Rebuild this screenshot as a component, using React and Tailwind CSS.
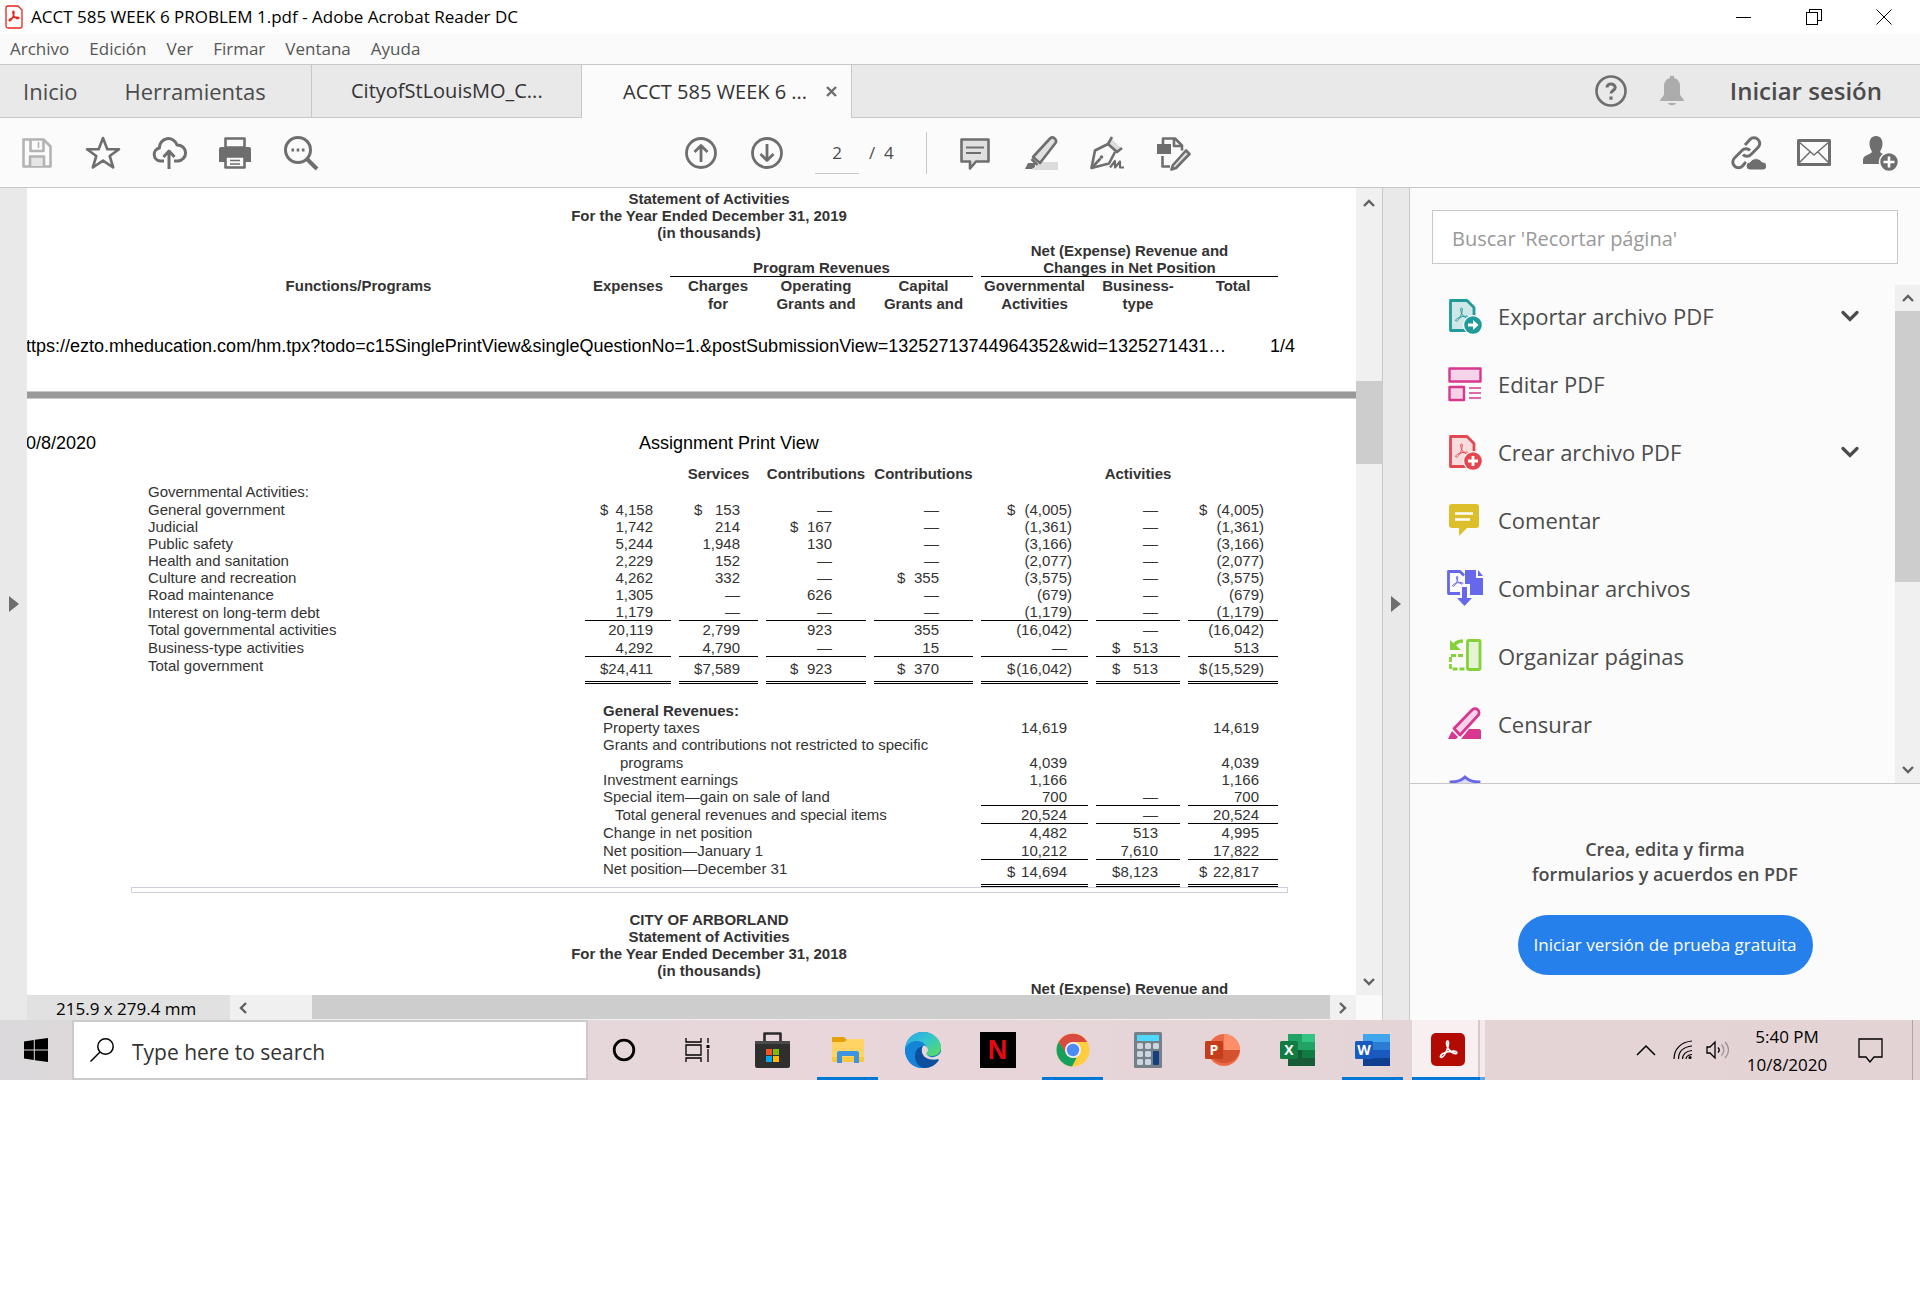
import clsx from "clsx";

const columns = [
  { width: "w-[86px]", pad: "pr-[18px]", money: "w-[53px]" },
  { width: "w-[79px]", pad: "pr-[18px]", money: "w-[46px]" },
  { width: "w-[100px]", pad: "pr-[34px]", money: "w-[42px]" },
  { width: "w-[99px]", pad: "pr-[34px]", money: "w-[42px]" },
  { width: "w-[107px]", pad: "pr-[16px]", money: "w-[65px]", signed: true },
  { width: "w-[84px]", pad: "pr-[22px]", money: "w-[46px]" },
  { width: "w-[90px]", pad: "pr-[14px]", money: "w-[65px]", signed: true },
];

const activities = [
  { label: "Governmental Activities:", tall: true, cells: ["", "", "", "", "", "", ""] },
  { label: "General government", cells: ["$4,158", "$153", "—", "—", "$(4,005)", "—", "$(4,005)"] },
  { label: "Judicial", cells: ["1,742", "214", "$167", "—", "(1,361)", "—", "(1,361)"] },
  { label: "Public safety", cells: ["5,244", "1,948", "130", "—", "(3,166)", "—", "(3,166)"] },
  { label: "Health and sanitation", cells: ["2,229", "152", "—", "—", "(2,077)", "—", "(2,077)"] },
  { label: "Culture and recreation", cells: ["4,262", "332", "—", "$355", "(3,575)", "—", "(3,575)"] },
  { label: "Road maintenance", tall: true, cells: ["1,305", "—", "626", "—", "(679)", "—", "(679)"] },
  { label: "Interest on long-term debt", rule: "single", cells: ["1,179", "—", "—", "—", "(1,179)", "—", "(1,179)"] },
  { label: "Total governmental activities", tall: true, cells: ["20,119", "2,799", "923", "355", "(16,042)", "—", "(16,042)"] },
  { label: "Business-type activities", tall: true, rule: "single", cells: ["4,292", "4,790", "—", "15", "—", "$513", "513"] },
  { label: "Total government", rule: "double", cells: ["$24,411", "$7,589", "$923", "$370", "$(16,042)", "$513", "$(15,529)"] },
];

const revenues = [
  { label: "General Revenues:", bold: true, cells: ["", "", ""] },
  { label: "Property taxes", cells: ["14,619", "", "14,619"] },
  { label: "Grants and contributions not restricted to specific", tall: true, cells: ["", "", ""] },
  { label: "programs", indent: "pl-[35px]", cells: ["4,039", "", "4,039"] },
  { label: "Investment earnings", cells: ["1,166", "", "1,166"] },
  { label: "Special item—gain on sale of land", tall: true, rule: "single", cells: ["700", "—", "700"] },
  { label: "Total general revenues and special items", indent: "pl-[30px]", tall: true, rule: "single", cells: ["20,524", "—", "20,524"] },
  { label: "Change in net position", tall: true, cells: ["4,482", "513", "4,995"] },
  { label: "Net position—January 1", tall: true, rule: "single", cells: ["10,212", "7,610", "17,822"] },
  { label: "Net position—December 31", rule: "double", cells: ["$14,694", "$8,123", "$22,817"] },
];

const tools = [
  { name: "Exportar archivo PDF", icon: ExportIcon, menu: true },
  { name: "Editar PDF", icon: EditIcon },
  { name: "Crear archivo PDF", icon: CreateIcon, menu: true },
  { name: "Comentar", icon: CommentToolIcon },
  { name: "Combinar archivos", icon: CombineIcon },
  { name: "Organizar páginas", icon: OrganizeIcon },
  { name: "Censurar", icon: RedactIcon },
  { name: "", icon: ShieldIcon },
];

const acrobatLoop =
  "M11.6 3.6c-1.7 0-1.2 4.2.6 7.4s5.2 5.3 7.4 5.1c2-.2 1.5-2.4-1.7-2.5-3.7-.1-8.2 1-11 2.5-2.6 1.4-3.1 3.6-1.7 3.7 1.9.1 4.4-3.9 5.9-7.8 1.4-3.7 2.1-8.4.5-8.4z";

/* ---------- document ---------- */

function Amount({ value, column }) {
  if (!value) return null;
  const inset = column.signed && !value.endsWith(")") && "pr-[5px]";
  if (value.startsWith("$")) {
    return (
      <span className={clsx("inline-flex justify-between", column.money, inset)}>
        <span>$</span>
        <span>{value.slice(1)}</span>
      </span>
    );
  }
  return <span className={clsx(inset)}>{value}</span>;
}

function StatementRow({ row, wide }) {
  const offset = wide ? 4 : 0;
  return (
    <tr className={row.rule === "double" ? "h-[27px]" : row.tall ? "h-[18px]" : "h-[17px]"}>
      {wide && <td />}
      <th
        scope="row"
        colSpan={wide ? 4 : 1}
        className={clsx(
          "text-left",
          row.rule === "double" ? "pt-px align-top" : "align-middle",
          row.bold ? "font-bold" : "font-normal",
          wide && (row.indent || "pl-[18px]")
        )}
      >
        {row.label}
      </th>
      {row.cells.map((value, i) => {
        const column = columns[i + offset];
        return (
          <td
            key={i}
            className={clsx(
              "text-right",
              column.pad,
              row.rule === "single" && "border-b border-black",
              row.rule === "double" && "border-b-3 border-double border-black"
            )}
          >
            <Amount value={value} column={column} />
          </td>
        );
      })}
    </tr>
  );
}

function StatementTitle({ lines }) {
  return (
    <div className="ml-[113px] w-[1138px] text-center text-[15px] leading-[17px] font-bold">
      {lines.map((line) => (
        <p key={line} className="last:leading-[18px]">{line}</p>
      ))}
    </div>
  );
}

function HeadingTable({ short }) {
  return (
    <table className="ml-[113px] w-[1146px] table-fixed border-separate border-spacing-x-2 border-spacing-y-0 text-[15px] leading-[16px]">
      <colgroup>
        <col />
        <col className="w-[77px]" />
        <col className="w-[88px]" />
        <col className="w-[100px]" />
        <col className="w-[99px]" />
        <col className="w-[107px]" />
        <col className="w-[84px]" />
        <col className="w-[90px]" />
      </colgroup>
      <thead>
        <tr className="h-[18px]">
          <td colSpan={5} />
          <th colSpan={3}>Net (Expense) Revenue and</th>
        </tr>
        {!short && (
          <>
            <tr className="h-[17px]">
              <td colSpan={2} />
              <th colSpan={3} className="border-b border-black">Program Revenues</th>
              <th colSpan={3} className="border-b border-black">Changes in Net Position</th>
            </tr>
            <tr className="h-[18px]">
              <th className="pr-2">Functions/Programs</th>
              <th className="pl-2">Expenses</th>
              <th className="pl-2">Charges</th>
              <th>Operating</th>
              <th>Capital</th>
              <th>Governmental</th>
              <th>Business-</th>
              <th>Total</th>
            </tr>
            <tr className="h-[18px]">
              <td colSpan={2} />
              <th className="pl-2">for</th>
              <th>Grants and</th>
              <th>Grants and</th>
              <th>Activities</th>
              <th>type</th>
              <td />
            </tr>
          </>
        )}
      </thead>
    </table>
  );
}

function StatementTable() {
  return (
    <table className="ml-[113px] w-[1146px] table-fixed border-separate border-spacing-x-2 border-spacing-y-0 text-[15px] leading-[16px]">
      <colgroup>
        <col />
        {columns.map((column, i) => (
          <col key={i} className={column.width} />
        ))}
      </colgroup>
      <thead>
        <tr className="h-[18px]">
          <td colSpan={2} />
          <th>Services</th>
          <th>Contributions</th>
          <th>Contributions</th>
          <td />
          <th>Activities</th>
          <td />
        </tr>
      </thead>
      <tbody>
        {activities.map((row) => (
          <StatementRow key={row.label} row={row} />
        ))}
        <tr className="h-[18px]">
          <td colSpan={8} />
        </tr>
        {revenues.map((row) => (
          <StatementRow key={row.label} row={row} wide />
        ))}
      </tbody>
    </table>
  );
}

function PdfPages() {
  return (
    <div className="min-h-0 flex-1 overflow-hidden bg-white font-['Liberation_Sans',Arial,sans-serif] text-[#333]">
      <div className="h-[203px] pt-[2px]">
        <StatementTitle
          lines={["Statement of Activities", "For the Year Ended December 31, 2019", "(in thousands)"]}
        />
        <HeadingTable />
        <div className="-ml-[11px] mt-[22px] flex text-[18px] leading-[22px] whitespace-nowrap text-black">
          <span className="w-[1254px]">
            https://ezto.mheducation.com/hm.tpx?todo=c15SinglePrintView&amp;singleQuestionNo=1.&amp;postSubmissionView=13252713744964352&amp;wid=1325271431…
          </span>
          <span>1/4</span>
        </div>
      </div>
      <div className="h-[8px] border-y border-[#c8c8c8] bg-[#999]" />
      <div className="-ml-[11px] mt-[33px] flex text-[18px] leading-[22px] text-black">
        <span className="w-[623px]">10/8/2020</span>
        <span>Assignment Print View</span>
      </div>
      <div className="mt-[11px]">
        <StatementTable />
      </div>
      <div className="ml-[104px] h-[6px] w-[1157px] border border-[#ccd0e0]" />
      <div className="mt-[18px]">
        <StatementTitle
          lines={[
            "CITY OF ARBORLAND",
            "Statement of Activities",
            "For the Year Ended December 31, 2018",
            "(in thousands)",
          ]}
        />
        <HeadingTable short />
      </div>
    </div>
  );
}

/* ---------- small shared pieces ---------- */

function Arrow({ className }) {
  return (
    <svg viewBox="0 0 12 8" className={clsx("h-[8px] w-[12px]", className)} fill="none" stroke="#606060" strokeWidth="2.4">
      <path d="M1 7l5-5 5 5" />
    </svg>
  );
}

function Stroke({ className, children, width = 2.6 }) {
  return (
    <svg
      viewBox="0 0 36 36"
      className={clsx("size-9", className)}
      fill="none"
      stroke="#6e6e6e"
      strokeWidth={width}
      strokeLinejoin="round"
    >
      {children}
    </svg>
  );
}

function SideHandle({ className }) {
  return (
    <button aria-label="Mostrar panel" className={clsx("flex shrink-0 items-center justify-center bg-[#e9e9e9]", className)}>
      <svg viewBox="0 0 10 16" className="h-[16px] w-[10px]" fill="#6e6e6e">
        <path d="M0 0l10 8-10 8z" />
      </svg>
    </button>
  );
}

/* ---------- tool icons ---------- */

function PageGlyph({ color, tint, children }) {
  return (
    <svg viewBox="0 0 36 36" className="size-9" fill="none">
      <path d="M3.500 2.500H20l7 7v23H3.500z" fill={tint} stroke={color} strokeWidth="2.800" strokeLinejoin="round" />
      <g transform="translate(5 7) scale(.82)">
        <path d={acrobatLoop} stroke={color} strokeWidth="1.200" />
      </g>
      <circle cx="26" cy="27" r="10" fill="#fbfbfb" />
      <circle cx="26" cy="27" r="8.800" fill={color} />
      {children}
    </svg>
  );
}

function ExportIcon() {
  return (
    <PageGlyph color="#1f9b9b" tint="#cfe7e7">
      <path d="M21 25.500h5v-3.500l5.500 5-5.500 5v-3.500h-5z" fill="#fff" />
    </PageGlyph>
  );
}

function CreateIcon() {
  return (
    <PageGlyph color="#e34850" tint="#f8dcdd">
      <path d="M26 22v10M21 27h10" stroke="#fff" strokeWidth="2.800" />
    </PageGlyph>
  );
}

function EditIcon() {
  return (
    <svg viewBox="0 0 36 36" className="size-9" fill="#f6d3e8" stroke="#d83790" strokeWidth="2.400" strokeLinejoin="round">
      <path d="M2.500 2.500h31v13h-31zM2.500 21h14.500v13H2.500z" />
      <path d="M22 22h12M22 27h12M22 32h12" strokeWidth="1.400" />
    </svg>
  );
}

function CommentToolIcon() {
  return (
    <svg viewBox="0 0 36 36" className="size-9" fill="#ddbf2b">
      <path d="M5 2h24a3 3 0 0 1 3 3v18a3 3 0 0 1-3 3H20l-8 8v-8H5a3 3 0 0 1-3-3V5a3 3 0 0 1 3-3z" />
      <path d="M8 11.500h18M8 17.500h15" stroke="#fff" strokeWidth="2.400" />
    </svg>
  );
}

function CombineIcon() {
  return (
    <svg viewBox="0 0 36 36" className="size-9" fill="none">
      <path d="M13 23.500H1.500v-22H13l4 4" stroke="#6767ec" strokeWidth="2.800" strokeLinejoin="round" />
      <g transform="translate(3 4) scale(.62)">
        <path d={acrobatLoop} stroke="#6767ec" strokeWidth="1.600" />
      </g>
      <path d="M18 0h11v8h8v17H23V14h-5z" fill="#6767ec" />
      <path d="M31 0l5 6h-5z" fill="#6767ec" />
      <path d="M15 17h5v11h5l-7.500 8-7.500-8h5z" fill="#6767ec" />
    </svg>
  );
}

function OrganizeIcon() {
  return (
    <svg viewBox="0 0 36 36" className="size-9" fill="none" stroke="#84d13a" strokeWidth="2.800">
      <rect x="20.500" y="2.500" width="12.500" height="29" rx="1" fill="#e3f3d3" />
      <path d="M16 17.500H3.500V31H18" strokeDasharray="5 2" />
      <path d="M16 3c-5 0-8 2-9 5" strokeWidth="3.400" />
      <path d="M3 2v10h11z" fill="#84d13a" stroke="none" />
    </svg>
  );
}

function RedactIcon() {
  return (
    <svg viewBox="0 0 36 36" className="size-9" fill="#d83790">
      <path d="M7 22.500L25 4a4 4 0 0 1 6 5.500L13 29z" fill="#f6d3e8" stroke="#d83790" strokeWidth="2.800" strokeLinejoin="round" />
      <path d="M1 33l4-8 6 6-2 2zM22 23h10a2 2 0 0 1 2 2v8H14z" />
    </svg>
  );
}

function ShieldIcon() {
  return (
    <svg viewBox="0 0 36 36" className="size-9" fill="#dcdcfa" stroke="#6767ec" strokeWidth="2.800">
      <path d="M4 8c6 0 10-1 14-5 4 4 8 5 14 5v12c0 8-7 12-14 15C11 32 4 28 4 20z" />
    </svg>
  );
}

/* ---------- window chrome ---------- */

function TitleBar() {
  return (
    <header className="flex h-[34px] items-center bg-white pr-[28px] pl-[5px]">
      <svg viewBox="0 0 18 24" className="h-[24px] w-[18px]" fill="none" stroke="#e8231a">
        <path d="M3 1h10l4 4v16a2 2 0 0 1-2 2H3a2 2 0 0 1-2-2V3a2 2 0 0 1 2-2z" strokeWidth="1.300" />
        <g transform="translate(1.500 4) scale(.6)">
          <path d={acrobatLoop} strokeWidth="2.200" />
        </g>
      </svg>
      <h1 className="ml-[8px] flex-1 text-[17px] text-black">ACCT 585 WEEK 6 PROBLEM 1.pdf - Adobe Acrobat Reader DC</h1>
      <div className="flex gap-[54px]">
        <button aria-label="Minimizar">
          <svg viewBox="0 0 16 16" className="size-4" stroke="#000" shapeRendering="crispEdges">
            <path d="M0 8.500h15" />
          </svg>
        </button>
        <button aria-label="Restaurar">
          <svg viewBox="0 0 16 16" className="size-4" fill="none" stroke="#000" shapeRendering="crispEdges">
            <path d="M.5 3.500h11v12H.5zM3.500 3.500v-3h12v11h-4" />
          </svg>
        </button>
        <button aria-label="Cerrar">
          <svg viewBox="0 0 16 16" className="size-4" stroke="#000">
            <path d="M.5.5l15 15M15.500.5l-15 15" />
          </svg>
        </button>
      </div>
    </header>
  );
}

function MenuBar() {
  return (
    <nav className="flex h-[30px] items-center gap-[20px] bg-[#fafafa] pl-[10px] text-[17px] text-[#555]">
      {["Archivo", "Edición", "Ver", "Firmar", "Ventana", "Ayuda"].map((item) => (
        <button key={item}>{item}</button>
      ))}
    </nav>
  );
}

function TabBar() {
  return (
    <div className="flex h-[54px] border-t border-[#c8c8c8] bg-[#e9e9e9] text-[#4b4b4b]">
      <div className="flex w-[312px] gap-[47px] border-r border-b border-[#c8c8c8] pl-[23px] text-[22px]">
        <button>Inicio</button>
        <button>Herramientas</button>
      </div>
      <button className="w-[270px] border-r border-b border-[#c8c8c8] pl-[39px] text-left text-[20px] text-[#333]">
        CityofStLouisMO_C...
      </button>
      <div className="flex w-[270px] items-center border-r border-[#c8c8c8] bg-[#fbfbfb] pl-[41px] text-[20px] text-[#333]">
        <button className="w-[203px] text-left">ACCT 585 WEEK 6 ...</button>
        <button aria-label="Cerrar pestaña">
          <svg viewBox="0 0 11 11" className="size-[11px]" stroke="#6e6e6e" strokeWidth="2.400">
            <path d="M1 1l9 9M10 1l-9 9" />
          </svg>
        </button>
      </div>
      <div className="flex flex-1 items-center justify-end border-b border-[#c8c8c8] pr-[38px]">
        <button aria-label="Ayuda">
          <svg viewBox="0 0 32 32" className="size-8" fill="none" stroke="#6e6e6e" strokeWidth="2.600">
            <circle cx="16" cy="16" r="14.500" />
            <path d="M12 12.500c0-5 8.200-4.600 8.200 0 0 3-4.200 3-4.200 6" strokeWidth="3" />
            <path d="M16 21.500v3.200" strokeWidth="3.200" />
          </svg>
        </button>
        <button aria-label="Notificaciones" className="ml-[32px]">
          <svg viewBox="0 0 26 30" className="h-[30px] w-[26px]" fill="#acacac">
            <path d="M11 0h4v2c4 1 6 4 6 8v8c0 2 4 5 4 7H1c0-2 4-5 4-7v-8c0-4 2-7 6-8zM9 27h8c-1 3-7 3-8 0z" />
          </svg>
        </button>
        <button className="ml-[45px] text-[24px] font-semibold">Iniciar sesión</button>
      </div>
    </div>
  );
}

function ToolBar() {
  return (
    <div className="flex h-[70px] items-center border-b border-[#c8c8c8] bg-[#fbfbfb] text-[#4b4b4b]">
      <div className="flex w-[683px] items-center gap-[30px] pl-[19px]">
        <button aria-label="Guardar">
          <svg viewBox="0 0 36 36" className="size-9" fill="none" stroke="#b3b3b3" strokeWidth="2.600" strokeLinejoin="round">
            <path d="M4.500 4.500h20l7 7v20h-27z" />
            <path d="M11.500 5v11h13V5" />
            <path d="M11 31V21.500h14V31" fill="#e6e6e6" />
            <path d="M19.500 7v6" strokeWidth="1.600" />
          </svg>
        </button>
        <button aria-label="Favoritos">
          <Stroke>
            <path d="M18 3l4.300 11.200H34L24.700 21l3.500 11.500L18 25.600 7.800 32.500 11.300 21 2 14.200h11.700z" />
          </Stroke>
        </button>
        <button aria-label="Subir a la nube">
          <Stroke width={3}>
            <path d="M13 26H9a6.600 6.600 0 0 1-.6-13A9 9 0 0 1 26 10a7.500 7.500 0 0 1 1 16h-4" />
            <path d="M18 34V17M12.500 22l5.500-6 5.500 6" />
          </Stroke>
        </button>
        <button aria-label="Imprimir">
          <Stroke>
            <path d="M8.500 3.500h19v9h-19z" />
            <path d="M4 12h28a2 2 0 0 1 2 2v13h-6v-5H8v5H2V14a2 2 0 0 1 2-2z" fill="#6e6e6e" stroke="none" />
            <path d="M8.500 21.500h19v11h-19z" fill="#fbfbfb" />
            <path d="M13 25.500h10M13 29h10" strokeWidth="1.400" />
          </Stroke>
        </button>
        <button aria-label="Buscar">
          <Stroke width={3}>
            <circle cx="15" cy="15" r="12.500" />
            <path d="M24 24l10 10" strokeWidth="4" />
            <path d="M8.500 15h2.600M13.700 15h2.600M18.900 15h2.600" />
          </Stroke>
        </button>
      </div>
      <button aria-label="Página anterior">
        <Stroke width={2.800}>
          <circle cx="18" cy="18" r="14.500" />
          <path d="M18 27V10.500M11.500 17L18 10.500l6.500 6.500" />
        </Stroke>
      </button>
      <button aria-label="Página siguiente" className="ml-[30px]">
        <Stroke width={2.800}>
          <circle cx="18" cy="18" r="14.500" />
          <path d="M18 9v16.500M11.500 19l6.500 6.500 6.500-6.500" />
        </Stroke>
      </button>
      <input
        aria-label="Página"
        defaultValue="2"
        className="ml-[30px] h-[42px] w-[44px] border-b border-[#c8c8c8] bg-transparent text-center text-[17px]"
      />
      <span className="ml-[10px] text-[17px] whitespace-pre">/  4</span>
      <div className="ml-[32px] h-[42px] w-px bg-[#c8c8c8]" />
      <div className="ml-[30px] flex gap-[30px]">
        <button aria-label="Comentario">
          <Stroke>
            <path d="M4.500 4.500h27v22H19l-6 7v-7H4.500z" fill="#e0e0e0" />
            <path d="M9 12.500h18M9 18h15" strokeWidth="1.800" />
          </Stroke>
        </button>
        <button aria-label="Resaltar">
          <Stroke>
            <path d="M18 27h17v8H9z" fill="#dcdcdc" stroke="none" />
            <path d="M10 22L27 3.500a3.600 3.600 0 0 1 5.500 4.500L17 28z" fill="#e0e0e0" />
            <path d="M2 34l3-6 7 0 0 4-3 2z" fill="#6e6e6e" stroke="none" />
            <path d="M8.500 24l6 6" />
          </Stroke>
        </button>
        <button aria-label="Firmar">
          <Stroke>
            <path d="M22 3l10 10-5 4-8-9z" fill="#dcdcdc" stroke="none" />
            <path d="M23 2l-4 7 9 8 5-4" />
            <path d="M19 9L6 15.500 2.500 33 20 28.500 26 17" />
            <path d="M3 32.500l8.500-9" />
            <circle cx="12.500" cy="22" r="1.800" fill="#6e6e6e" stroke="none" />
            <path d="M21 32.500l5-6.500v6.500l5-6v6h4" strokeWidth="2.200" />
          </Stroke>
        </button>
        <button aria-label="Más herramientas">
          <Stroke>
            <path d="M8 9V3.500h12l7 7v5" />
            <path d="M19 4v7h8" />
            <path d="M2 9h14v10H2z" fill="#6e6e6e" stroke="none" />
            <path d="M7.500 21v10.500H15" />
            <path d="M31 15.500l3.500 3.500L21 33l-4.500 1.500L18 30z" fill="#e0e0e0" />
          </Stroke>
        </button>
      </div>
      <div className="ml-auto flex gap-[30px] pr-[22px]">
        <button aria-label="Compartir vínculo">
          <Stroke width={3}>
            <path d="M15 10l5-5.500a5.500 5.500 0 0 1 8 0 5.500 5.500 0 0 1 0 8l-7 7a5.500 5.500 0 0 1-8 0" />
            <path d="M16 27l-3.500 4a5.500 5.500 0 0 1-8 0 5.500 5.500 0 0 1 0-8l7.500-7.500a5.500 5.500 0 0 1 8 0" />
            <path d="M20 35a4 4 0 0 1 0-8 7 7 0 0 1 12 0 4 4 0 0 1 1 8z" fill="#6e6e6e" stroke="#fbfbfb" strokeWidth="1" />
          </Stroke>
        </button>
        <button aria-label="Enviar por correo">
          <Stroke width={2.400}>
            <path d="M2.500 5.500h31v24h-31z" strokeWidth="3" />
            <path d="M3 7l15 13L33 7M3 28l11-11M33 28L22 17" strokeWidth="1.500" />
          </Stroke>
        </button>
        <button aria-label="Compartir con otros">
          <Stroke>
            <path d="M14 1c5 0 6.500 4 6.500 8s-2 6-2.500 8c2 2 6 3 7 5l-7 7H1v-4c0-5 7-5 9-8-.5-2-2.500-4-2.500-8S9 1 14 1z" fill="#6e6e6e" stroke="none" />
            <circle cx="27" cy="27" r="9.500" fill="#6e6e6e" stroke="#fbfbfb" strokeWidth="1.600" />
            <path d="M27 21.500v11M21.500 27h11" stroke="#fff" />
          </Stroke>
        </button>
      </div>
    </div>
  );
}

function DocumentArea() {
  return (
    <section className="flex min-w-0 flex-1 flex-col">
      <div className="flex min-h-0 flex-1">
        <div className="flex min-w-0 flex-1 flex-col">
          <PdfPages />
        </div>
        <div className="flex w-[26px] shrink-0 flex-col items-center bg-[#f0f0f0]">
          <button aria-label="Subir" className="flex h-[30px] items-center"><Arrow /></button>
          <div className="mt-[163px] h-[83px] w-full bg-[#cdcdcd]" />
          <button aria-label="Bajar" className="mt-auto flex h-[27px] items-center"><Arrow className="rotate-180" /></button>
        </div>
      </div>
      <div className="flex h-[25px] bg-[#fafafa]">
        <div className="w-[203px] shrink-0 bg-[#e1e1e1] pl-[29px] text-[17px] leading-[27px] text-black">215.9 x 279.4 mm</div>
        <div className="flex flex-1 bg-[#f0f0f0]">
          <button aria-label="Izquierda" className="flex w-[82px] items-center pl-[7px]"><Arrow className="-rotate-90" /></button>
          <div className="h-[24px] flex-1 bg-[#cdcdcd]" />
          <button aria-label="Derecha" className="flex w-[26px] items-center justify-center"><Arrow className="rotate-90" /></button>
        </div>
        <div className="w-[26px] shrink-0" />
      </div>
    </section>
  );
}

function ToolsPanel() {
  return (
    <aside className="flex w-[511px] shrink-0 flex-col border-l border-[#c8c8c8] bg-[#fbfbfb] text-[#4b4b4b]">
      <div className="px-[22px] pt-[22px]">
        <input
          aria-label="Buscar herramientas"
          placeholder="Buscar 'Recortar página'"
          className="h-[54px] w-full border border-[#c8c8c8] bg-white px-[19px] pt-[2px] text-[20px] placeholder:text-[#999]"
        />
      </div>
      <div className="mt-[21px] flex h-[498px] overflow-hidden">
        <ul className="flex flex-1 flex-col gap-[6px] pl-[37px]">
          {tools.map(({ name, icon: Icon, menu }) => (
            <li key={name} className="h-[62px] shrink-0">
              <button aria-label={name || "Proteger"} className="flex h-full w-full items-center pr-[36px] text-[22px]">
                <Icon />
                <span className="ml-[15px] flex-1 text-left">{name}</span>
                {menu && (
                  <svg viewBox="0 0 18 12" className="h-[12px] w-[18px]" fill="none" stroke="#4b4b4b" strokeWidth="3.200" strokeLinecap="round">
                    <path d="M2 2.500l7 7 7-7" />
                  </svg>
                )}
              </button>
            </li>
          ))}
        </ul>
        <div className="flex w-[25px] flex-col items-center bg-[#f0f0f0]">
          <button aria-label="Subir" className="flex h-[26px] items-center"><Arrow /></button>
          <div className="h-[271px] w-full bg-[#cdcdcd]" />
          <button aria-label="Bajar" className="mt-auto flex h-[26px] items-center"><Arrow className="rotate-180" /></button>
        </div>
      </div>
      <div className="flex-1 border-t border-[#c8c8c8] pt-[53px] text-center">
        <p className="text-[18px] leading-[25px] font-semibold">
          Crea, edita y firma
          <br />
          formularios y acuerdos en PDF
        </p>
        <button className="mt-[28px] h-[60px] w-[295px] rounded-full bg-[#2680eb] text-[17px] text-white">
          Iniciar versión de prueba gratuita
        </button>
      </div>
    </aside>
  );
}

/* ---------- taskbar ---------- */

function OfficeIcon({ letter, badge, children }) {
  return (
    <svg viewBox="0 0 36 36" className="size-9" aria-hidden="true">
      {children}
      <rect x="0" y="9" width="18" height="18" rx="1.500" fill={badge} />
      <text x="9" y="23" textAnchor="middle" fill="#fff" fontSize="14" fontWeight="700" fontFamily="Open Sans, sans-serif">
        {letter}
      </text>
    </svg>
  );
}

function TaskButton({ label, open, children }) {
  return (
    <button aria-label={label} className="relative flex h-full w-[75px] shrink-0 items-center justify-center">
      {children}
      {open && <span className="absolute inset-x-[7px] bottom-0 h-[3px] bg-[#0078d7]" />}
    </button>
  );
}

function Taskbar() {
  return (
    <footer className="flex h-[60px] items-center bg-linear-to-r from-[#dbd9db] from-0% via-[#e8d6da] via-40% to-[#e3d3d4] to-100%">
      <button aria-label="Inicio" className="flex w-[72px] shrink-0 justify-center">
        <svg viewBox="0 0 24 24" className="size-6" fill="#000">
          <path d="M0 3.400l9.800-1.400v9.500H0zM10.800 1.800L24 0v11.500H10.800zM0 12.500h9.800V22L0 20.600zM10.800 12.500H24V24l-13.200-1.800z" />
        </svg>
      </button>
      <label className="flex h-full w-[516px] shrink-0 items-center border-2 border-[#cbcbcb] bg-white pl-[16px]">
        <svg viewBox="0 0 24 24" className="size-6" fill="none" stroke="#000" strokeWidth="1.500">
          <circle cx="15.500" cy="8.500" r="7.700" />
          <path d="M10 14L.5 23.500" />
        </svg>
        <input
          aria-label="Search"
          placeholder="Type here to search"
          className="ml-[18px] h-full flex-1 pt-1 text-[21px] placeholder:text-[#333]"
        />
      </label>
      <button aria-label="Cortana" className="flex w-[72px] shrink-0 justify-center">
        <svg viewBox="0 0 24 24" className="size-6" fill="none" stroke="#000" strokeWidth="2.800">
          <circle cx="12" cy="12" r="9.800" />
        </svg>
      </button>
      <TaskButton label="Task View">
        <svg viewBox="0 0 26 24" className="h-[24px] w-[26px]" fill="none" stroke="#000" strokeWidth="1.300">
          <path d="M1 0v4h15V0M1 7h15v10H1zM1 24v-4h15v4M23 0v5M23 11v13" />
          <path d="M21.500 7h3v3h-3z" fill="#000" stroke="none" />
        </svg>
      </TaskButton>
      <TaskButton label="Microsoft Store">
        <svg viewBox="0 0 36 36" className="size-9">
          <path d="M9.500 11V1.500h16V11" fill="none" stroke="#2b2b2b" strokeWidth="2.600" strokeLinejoin="round" />
          <path d="M0 9h35v25a2 2 0 0 1-2 2H2a2 2 0 0 1-2-2z" fill="#2f2f2f" />
          <path d="M0 9h35v3H0z" fill="#4a4a4a" />
          <path d="M11 17h6v6h-6z" fill="#f35325" />
          <path d="M18 17h6v6h-6z" fill="#81bc06" />
          <path d="M11 24h6v6h-6z" fill="#05a6f0" />
          <path d="M18 24h6v6h-6z" fill="#ffba08" />
        </svg>
      </TaskButton>
      <TaskButton label="File Explorer" open>
        <svg viewBox="0 0 36 36" className="size-9">
          <path d="M2 6a1 1 0 0 1 1-1h11l3 3v5H2z" fill="#e3a008" />
          <path d="M2 10h12l4-3h15a1 1 0 0 1 1 1v21a1 1 0 0 1-1 1H3a1 1 0 0 1-1-1z" fill="#ffd464" />
          <path d="M2 25h32v4a1 1 0 0 1-1 1H3a1 1 0 0 1-1-1z" fill="#fcc740" />
          <path d="M7 31V21a2 2 0 0 1 2-2h18a2 2 0 0 1 2 2v10h-5v-7H12v7z" fill="#3b96dd" />
        </svg>
      </TaskButton>
      <TaskButton label="Microsoft Edge">
        <svg viewBox="0 0 36 36" className="size-9">
          <defs>
            <linearGradient id="edge-top" x1="0" y1="0" x2="1" y2="1">
              <stop offset="0" stopColor="#2aa9ee" />
              <stop offset=".5" stopColor="#35c6c9" />
              <stop offset="1" stopColor="#5fe04f" />
            </linearGradient>
          </defs>
          <circle cx="18" cy="18" r="18" fill="#0a7ad1" />
          <path d="M0 17C1 7 8 0 18 0c11 0 18 8 18 15 0 6-4 9-9 9-4 0-7-1-6-3 3-4 1-8-4-9-7-1.500-15 0-17 5z" fill="url(#edge-top)" />
          <path d="M0 17c2-6 8-8.500 13-8 5 .5 8 4 8 6-6-2-11 3-11 9 0 5 3 9 7 12C7 36 0 28 0 17z" fill="#1583d8" />
          <path d="M10 24c0-6 4-9 8-10-3 3-1 14 12 14 3 0 4-1 4 0-3 5-9 8-14 8-6 0-10-6-10-12z" fill="#0c4f9e" />
          <path d="M18 14c2-1 5 1 5 4 0 2-3 3-1 5 4 4 11 2 14-3v8c-1 1-2-1-3-1-13 3-19-6-15-13z" fill="#e8d6da" />
        </svg>
      </TaskButton>
      <TaskButton label="Netflix">
        <span className="flex size-9 items-center justify-center bg-black font-['Liberation_Sans_Narrow','Liberation_Sans',sans-serif] text-[27px] font-bold text-[#e50914]">
          N
        </span>
      </TaskButton>
      <TaskButton label="Google Chrome" open>
        <svg viewBox="0 0 36 36" className="size-9">
          <circle cx="18" cy="18" r="16.500" fill="#ffcd40" />
          <path d="M3.700 9.800A16.500 16.500 0 0 1 32.300 10H18l-7.400 12z" fill="#d94b3f" />
          <path d="M3.700 9.800L11.500 22l10 4-4.500 8.500A16.500 16.500 0 0 1 3.700 9.800z" fill="#15a05d" />
          <circle cx="18" cy="18" r="8" fill="#f1f1f1" />
          <circle cx="18" cy="18" r="6.200" fill="#4c8bf5" />
        </svg>
      </TaskButton>
      <TaskButton label="Calculator">
        <svg viewBox="0 0 28 36" className="h-[36px] w-[28px]">
          <rect width="28" height="36" rx="1.500" fill="#76808a" />
          <path d="M3 3h22v6H3z" fill="#4cd9fb" />
          <g fill="#cdd5de">
            <rect x="3" y="11" width="6" height="6" rx="1.500" />
            <rect x="11" y="11" width="6" height="6" rx="1.500" />
            <rect x="19" y="11" width="6" height="6" rx="1.500" />
            <rect x="3" y="19" width="6" height="6" rx="1.500" />
            <rect x="11" y="19" width="6" height="6" rx="1.500" />
            <rect x="3" y="27" width="6" height="6" rx="1.500" />
            <rect x="11" y="27" width="6" height="6" rx="1.500" />
          </g>
          <rect x="19" y="19" width="6" height="14" rx="1" fill="#143f80" />
        </svg>
      </TaskButton>
      <TaskButton label="PowerPoint">
        <OfficeIcon letter="P" badge="#c43e1c">
          <circle cx="19" cy="18" r="16" fill="#ed6c47" />
          <path d="M19 2a16 16 0 0 1 16 16H19z" fill="#ff8f6b" />
          <path d="M3.500 18H35a16 16 0 0 1-31.500 0z" fill="#d35230" />
        </OfficeIcon>
      </TaskButton>
      <TaskButton label="Excel">
        <OfficeIcon letter="X" badge="#107c41">
          <path d="M8 2h27v32H8z" fill="#185c37" />
          <path d="M8 2h14v16H8z" fill="#21a366" />
          <path d="M22 2h13v8H22z" fill="#33c481" />
          <path d="M22 10h13v8H22z" fill="#21a366" />
          <path d="M22 18h13v8H22z" fill="#107c41" />
        </OfficeIcon>
      </TaskButton>
      <TaskButton label="Word" open>
        <OfficeIcon letter="W" badge="#185abd">
          <path d="M8 2h27v8H8z" fill="#41a5ee" />
          <path d="M8 10h27v8H8z" fill="#2b7cd3" />
          <path d="M8 18h27v8H8z" fill="#185abd" />
          <path d="M8 26h27v8H8z" fill="#103f91" />
        </OfficeIcon>
      </TaskButton>
      <button aria-label="Adobe Acrobat Reader" className="ml-[2px] flex h-full w-[73px] shrink-0">
        <span className="flex h-full w-[66px] items-center justify-center border-b-3 border-[#0078d7] bg-[#f8f0f0] pt-[3px] pl-[5px]">
          <svg viewBox="0 0 34 34" className="size-[34px]">
            <rect width="34" height="33" rx="5" fill="#b30b00" />
            <g transform="translate(5 4.500)">
              <path d={acrobatLoop} fill="none" stroke="#fff" strokeWidth="1.700" />
            </g>
          </svg>
        </span>
        <span className="h-full w-[2px] border-b-3 border-[#0078d7] bg-[#d6c9cb]" />
        <span className="h-full w-[5px] border-b-3 border-[#5fa8e4] bg-[#f5e9e9]" />
      </button>
      <div className="ml-auto flex h-full items-center">
        <svg viewBox="0 0 20 12" className="h-[12px] w-[20px]" fill="none" stroke="#000" strokeWidth="1.500">
          <path d="M1 11l9-9 9 9" />
        </svg>
        <svg viewBox="0 0 20 20" className="ml-[17px] size-5" fill="none" stroke="#000" strokeWidth="1.200">
          <path d="M1 19C1 9 8 2 19 1M5.500 19C5.500 12 10 7 19 6M9.500 19c0-4 3-8 9.500-8.500M13 19c0-2 2-4 6-4.500" />
          <circle cx="17" cy="17.500" r="1.600" fill="#000" stroke="none" />
        </svg>
        <svg viewBox="0 0 24 20" className="ml-[13px] h-[20px] w-[24px]" fill="none" stroke="#000" strokeWidth="1.300">
          <path d="M1 7h3l5-5v16l-5-5H1zM12 7.500c1.500 1.500 1.500 3.500 0 5" />
          <path d="M15.500 4.500c3 3 3 8 0 11M19 2c4.500 5 4.500 11 0 16" stroke="#9a9092" />
        </svg>
        <div className="ml-[15px] w-[84px] pt-px text-center text-[17px] leading-[28px] text-black">
          <p>5:40 PM</p>
          <p>10/8/2020</p>
        </div>
        <svg viewBox="0 0 25 25" className="ml-[29px] size-[25px]" fill="none" stroke="#000" strokeWidth="1.300">
          <path d="M1 1h23v18h-8l-4 5-4-5H1z" />
        </svg>
        <div className="ml-[29px] h-full w-[8px] border-l border-[#b0a5a6]" />
      </div>
    </footer>
  );
}

export default function App() {
  return (
    <div className="min-h-screen bg-white font-['Open_Sans','Noto_Sans',sans-serif]">
      <TitleBar />
      <MenuBar />
      <TabBar />
      <ToolBar />
      <main className="flex h-[832px]">
        <SideHandle className="w-[27px]" />
        <DocumentArea />
        <SideHandle className="w-[27px] border-l border-[#c8c8c8]" />
        <ToolsPanel />
      </main>
      <Taskbar />
    </div>
  );
}
